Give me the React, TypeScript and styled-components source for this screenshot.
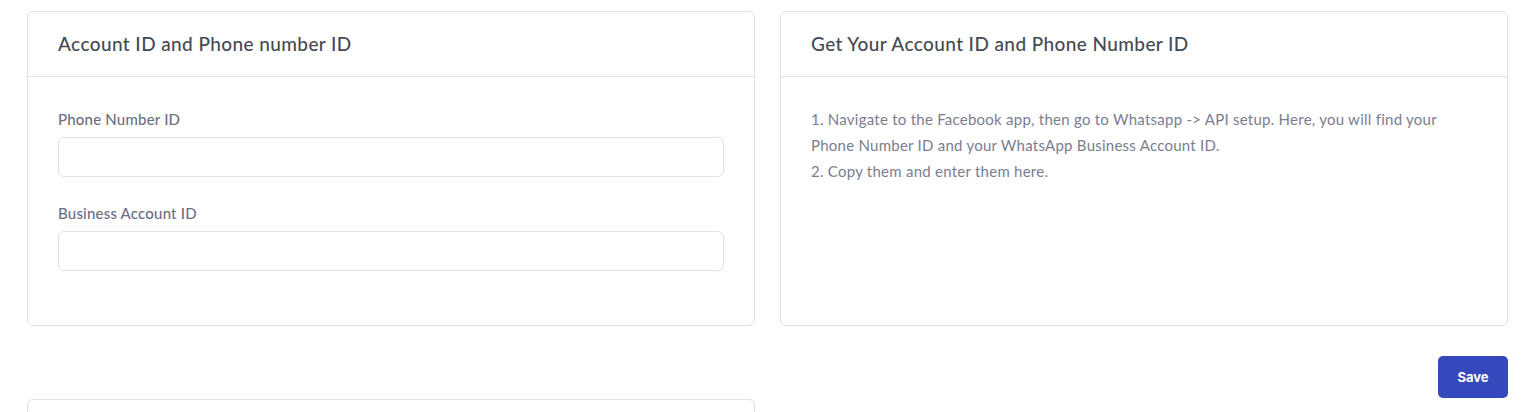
import React, { FunctionComponent } from 'react';
import styled, { createGlobalStyle } from 'styled-components';

const GlobalStyle = createGlobalStyle`
  html, body {
    margin: 0;
    padding: 0;
    background: #ffffff;
  }
  body {
    font-family: Lato, 'Open Sans', sans-serif;
  }
  * {
    box-sizing: border-box;
  }
`;

const Page = styled.div`
  padding: 11px 20px 0 27px;
`;

const Grid = styled.div`
  display: grid;
  grid-template-columns: 1fr 1fr;
  column-gap: 25px;
  align-items: start;
`;

const Card = styled.section<{ readonly height?: number }>`
  border: 1px solid #dfe1ec;
  border-radius: 6px;
  background: #ffffff;
  height: ${({ height }) => (height ? `${height}px` : 'auto')};
`;

const CardHeader = styled.header`
  height: 65px;
  padding: 0 30px 1px;
  display: flex;
  align-items: center;
  border-bottom: 1px solid #dfe1ec;
`;

const Title = styled.h4`
  margin: 0;
  font-size: 19px;
  font-weight: 500;
  color: #464a53;
  letter-spacing: 0.4px;
`;

const CardBody = styled.div`
  padding: 33px 30px 0;
`;

const Field = styled.div`
  display: flex;
  flex-direction: column;
  margin-bottom: 27px;
`;

const Label = styled.label`
  font-size: 15px;
  font-weight: 500;
  color: #6c6e82;
  letter-spacing: 0.2px;
  margin-bottom: 9px;
`;

const Input = styled.input`
  height: 40px;
  width: 100%;
  border: 1px solid #dfe1ec;
  border-radius: 6px;
  padding: 0 14px;
  font-size: 15px;
  outline: none;
`;

// the steps text sits a little higher than the labels on the left
const Steps = styled.p`
  margin: -4px 0 0;
  font-size: 15px;
  line-height: 26px;
  letter-spacing: 0.25px;
  color: #7b7d8f;
`;

const Actions = styled.div`
  display: flex;
  justify-content: flex-end;
  padding-top: 30px;
`;

const SaveButton = styled.button`
  width: 70px;
  height: 42px;
  border: none;
  border-radius: 5px;
  background: #3549bd;
  color: #ffffff;
  font-family: Inter, 'Liberation Sans', sans-serif;
  font-size: 13px;
  font-weight: 700;
  cursor: pointer;
`;

const LowerCard = styled(Card)`
  height: 13px;
  margin-top: 1px;
  border-bottom: none;
  border-bottom-left-radius: 0;
  border-bottom-right-radius: 0;
`;

const App: FunctionComponent = () => (
  <Page>
    <GlobalStyle />
    <Grid>
      <Card height={315}>
        <CardHeader>
          <Title>Account ID and Phone number ID</Title>
        </CardHeader>
        <CardBody>
          <Field>
            <Label>Phone Number ID</Label>
            <Input type="text" />
          </Field>
          <Field>
            <Label>Business Account ID</Label>
            <Input type="text" />
          </Field>
        </CardBody>
      </Card>
      <Card height={315}>
        <CardHeader>
          <Title>Get Your Account ID and Phone Number ID</Title>
        </CardHeader>
        <CardBody>
          <Steps>
            1. Navigate to the Facebook app, then go to Whatsapp -&gt; API setup. Here, you will find your
            <br />
            Phone Number ID and your WhatsApp Business Account ID.
            <br />
            2. Copy them and enter them here.
          </Steps>
        </CardBody>
      </Card>
    </Grid>
    <Actions>
      <SaveButton>Save</SaveButton>
    </Actions>
    <Grid>
      <LowerCard />
    </Grid>
  </Page>
);

export default App;
